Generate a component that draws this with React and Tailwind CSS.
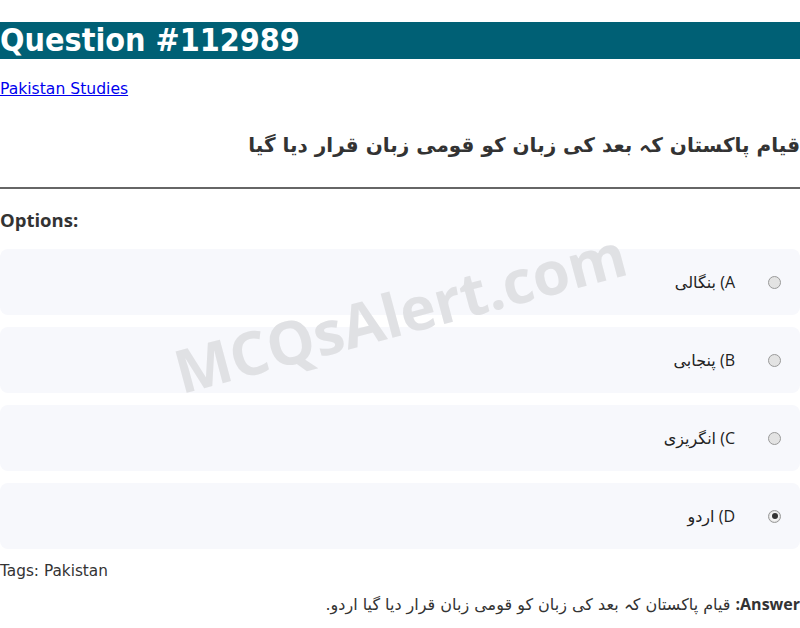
import React from "react";

const OPTIONS = [
  { key: "A", text: "بنگالی", checked: false },
  { key: "B", text: "پنجابی", checked: false },
  { key: "C", text: "انگریزی", checked: false },
  { key: "D", text: "اردو", checked: true },
];

const QUESTION = "قیام پاکستان کہ بعد کی زبان کو قومی زبان قرار دیا گیا";

function Radio({ checked }) {
  return (
    <span className="flex h-[13px] w-[13px] shrink-0 items-center justify-center rounded-full border border-[#9a9a9a] bg-[#e3e3e3]">
      {checked && (
        <span className="flex h-[9px] w-[9px] items-center justify-center rounded-full bg-[#f4f4f4]">
          <span className="h-[6px] w-[6px] rounded-full bg-[#333]" />
        </span>
      )}
    </span>
  );
}

function OptionCard({ option }) {
  return (
    <label
      dir="rtl"
      className="flex h-[66px] items-center rounded-lg bg-[#f7f8fc] pr-[19px] text-[16px] text-[#222]"
    >
      <Radio checked={option.checked} />
      <span className="mr-[33px]">
        {option.key}) {option.text}
      </span>
    </label>
  );
}

export default function App() {
  return (
    <div className="relative min-h-screen overflow-hidden bg-white pb-4 font-['DejaVu_Sans',sans-serif]">
      <h1 className="mt-[22px] bg-[#006075] font-['DejaVu_Sans_Condensed','DejaVu_Sans',sans-serif] text-[32px] font-bold leading-[37px] text-white">
        Question #112989
      </h1>

      <a
        href="#"
        className="mt-[21px] block w-fit text-[15.6px] leading-[19px] text-[#0000ee] underline"
      >
        Pakistan Studies
      </a>

      <h2
        dir="rtl"
        className="mt-[31px] text-right text-[20px] font-bold leading-[30px] text-[#333]"
      >
        {QUESTION}
      </h2>

      <hr className="mt-[27px] border-t-2 border-[#666]" />

      <div className="mt-[20px] font-['Open_Sans','DejaVu_Sans',sans-serif] text-[18.5px] font-bold leading-[22px] text-[#333]">
        Options:
      </div>

      <div className="mt-[18px] flex flex-col gap-3 font-['Open_Sans','DejaVu_Sans',sans-serif]">
        {OPTIONS.map((option) => (
          <OptionCard key={option.key} option={option} />
        ))}
      </div>

      <p className="mt-[13px] text-[15.3px] leading-[18px] text-[#333]">
        Tags: Pakistan
      </p>

      <p
        dir="rtl"
        className="mt-[15px] text-right text-[16px] leading-[18px] text-[#333]"
      >
        <strong className="font-['Open_Sans',sans-serif] font-bold">Answer:</strong> {QUESTION} اردو.
      </p>

      {/* watermark */}
      <div className="pointer-events-none absolute left-1/2 top-[312px] -translate-x-1/2 -translate-y-1/2 -rotate-[15deg] whitespace-nowrap font-['Open_Sans',sans-serif] text-[60px] font-bold text-[#e0e1e4]">
        MCQsAlert.com
      </div>
    </div>
  );
}
